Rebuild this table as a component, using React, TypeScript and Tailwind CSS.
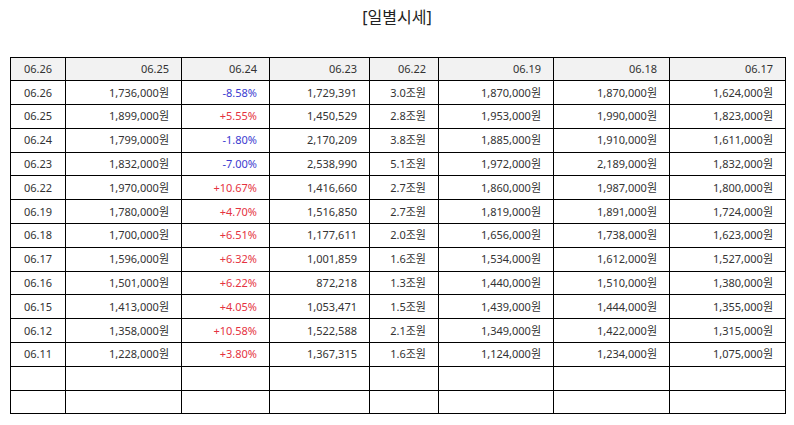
import React from "react";

type Row = [string, string, string, string, string, string, string, string];

const rows: Row[] = [
  ["06.26", "1,736,000원", "-8.58%", "1,729,391", "3.0조원", "1,870,000원", "1,870,000원", "1,624,000원"],
  ["06.25", "1,899,000원", "+5.55%", "1,450,529", "2.8조원", "1,953,000원", "1,990,000원", "1,823,000원"],
  ["06.24", "1,799,000원", "-1.80%", "2,170,209", "3.8조원", "1,885,000원", "1,910,000원", "1,611,000원"],
  ["06.23", "1,832,000원", "-7.00%", "2,538,990", "5.1조원", "1,972,000원", "2,189,000원", "1,832,000원"],
  ["06.22", "1,970,000원", "+10.67%", "1,416,660", "2.7조원", "1,860,000원", "1,987,000원", "1,800,000원"],
  ["06.19", "1,780,000원", "+4.70%", "1,516,850", "2.7조원", "1,819,000원", "1,891,000원", "1,724,000원"],
  ["06.18", "1,700,000원", "+6.51%", "1,177,611", "2.0조원", "1,656,000원", "1,738,000원", "1,623,000원"],
  ["06.17", "1,596,000원", "+6.32%", "1,001,859", "1.6조원", "1,534,000원", "1,612,000원", "1,527,000원"],
  ["06.16", "1,501,000원", "+6.22%", "872,218", "1.3조원", "1,440,000원", "1,510,000원", "1,380,000원"],
  ["06.15", "1,413,000원", "+4.05%", "1,053,471", "1.5조원", "1,439,000원", "1,444,000원", "1,355,000원"],
  ["06.12", "1,358,000원", "+10.58%", "1,522,588", "2.1조원", "1,349,000원", "1,422,000원", "1,315,000원"],
  ["06.11", "1,228,000원", "+3.80%", "1,367,315", "1.6조원", "1,124,000원", "1,234,000원", "1,075,000원"],
];

const headers = ["06.26", "06.25", "06.24", "06.23", "06.22", "06.19", "06.18", "06.17"];
const widths = ["w-[55px]", "w-[116px]", "w-[88px]", "w-[100px]", "w-[69px]", "w-[115px]", "w-[116px]", "w-[116px]"];

export default function App() {
  return (
    <div
      className="w-[794px] h-[425px] bg-white text-[#333]"
      style={{ fontFamily: '"Noto Sans", "Noto Sans CJK KR", sans-serif' }}
    >
      <div className="pt-[5px] h-[56.5px] text-center text-[16px] leading-[24px] text-[#222]">[일별시세]</div>
      <div className="px-[10px]">
        <table className="w-[775px] border-collapse table-fixed text-[11px] leading-[14px]">
          <colgroup>
            {widths.map((w, i) => (
              <col key={i} className={w} />
            ))}
          </colgroup>
          <thead>
            <tr className="h-[23.8px] bg-[#f2f2f2]">
              {headers.map((h, i) => (
                <th
                  key={i}
                  className={`border border-black font-normal p-0 ${i === 0 ? "text-center" : "text-right pr-[12px]"}`}
                >
                  {h}
                </th>
              ))}
            </tr>
          </thead>
          <tbody>
            {rows.map((r, ri) => (
              <tr key={ri} className="h-[23.8px]">
                {r.map((c, ci) => {
                  let color = "";
                  if (ci === 2) color = c.startsWith("-") ? "text-[#3b3bd0]" : "text-[#e5333f]";
                  return (
                    <td
                      key={ci}
                      className={`border border-black p-0 ${ci === 0 ? "text-center" : "text-right pr-[12px]"} ${color}`}
                    >
                      {c}
                    </td>
                  );
                })}
              </tr>
            ))}
            {[0, 1].map((k) => (
              <tr key={`e${k}`} className="h-[23.8px]">
                {headers.map((_, ci) => (
                  <td key={ci} className="border border-black p-0" />
                ))}
              </tr>
            ))}
          </tbody>
        </table>
      </div>
    </div>
  );
}
